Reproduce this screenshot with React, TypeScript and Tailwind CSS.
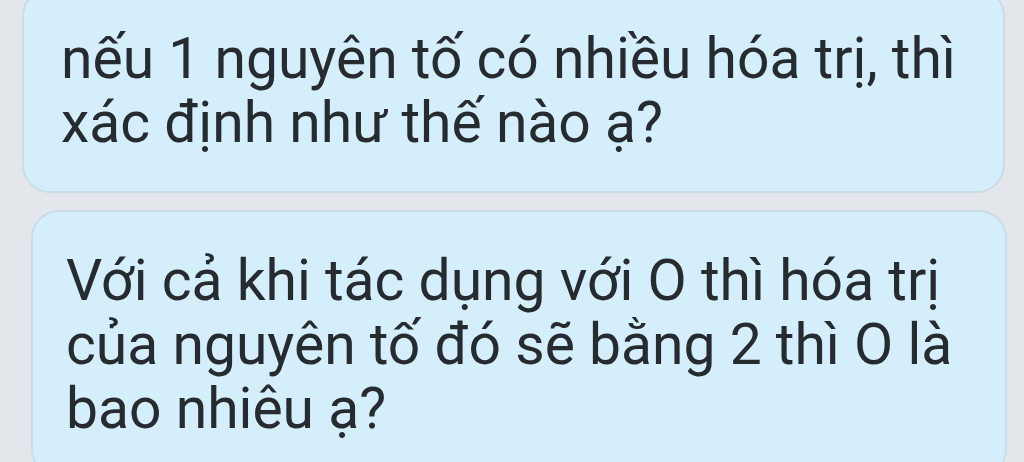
import React from "react";

export default function App() {
  return (
    <div
      className="w-[1024px] h-[462px] overflow-hidden bg-[#e3e7ec] flex flex-col gap-[17px] text-[#262b30]"
      style={{ fontFamily: "Roboto, 'Noto Sans', sans-serif" }}
    >
      <div className="ml-[22px] w-[983px] mt-[-12px] rounded-[28px] border-2 border-[#c9dce8] bg-[#d5eefc] pl-[37px] pr-[10px] pt-[37px] pb-[36px] text-[57px] font-normal leading-[64px] whitespace-nowrap">
        <p>nếu 1 nguyên tố có nhiều hóa trị, thì</p>
        <p>xác định như thế nào ạ?</p>
      </div>
      <div className="ml-[31px] w-[976px] rounded-[28px] border-2 border-[#c9dce8] bg-[#d5eefc] pl-[33px] pr-[10px] pt-[37px] pb-[34px] text-[57px] font-normal leading-[64px] whitespace-nowrap">
        <p>Với cả khi tác dụng với O thì hóa trị</p>
        <p>của nguyên tố đó sẽ bằng 2 thì O là</p>
        <p>bao nhiêu ạ?</p>
      </div>
    </div>
  );
}
